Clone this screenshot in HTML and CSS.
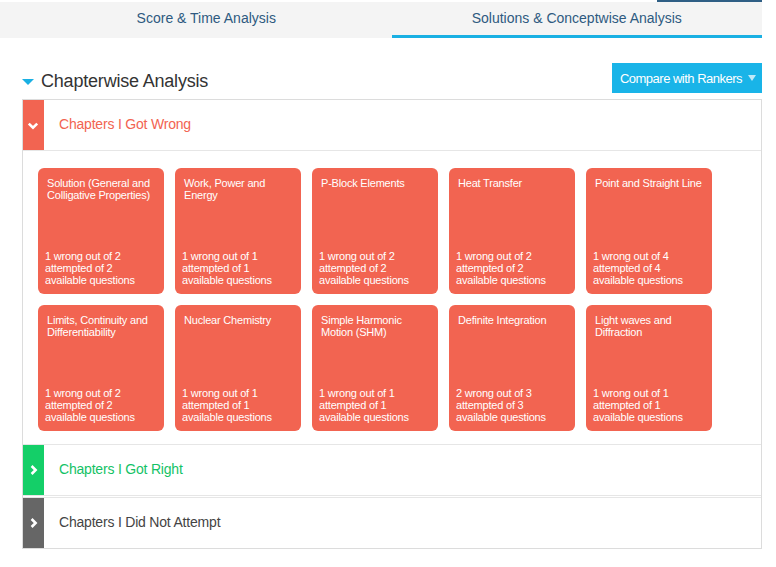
FILE: index.html
```html
<!DOCTYPE html>
<html lang="en">
<head>
  <meta charset="UTF-8" />
  <meta name="viewport" content="width=device-width, initial-scale=1.0"/>
  <title>Chapterwise Analysis</title>
  <link rel="stylesheet" href="styles.css">
</head>
<body>
  <div class="page">
    <div class="top-strip"><span></span></div>

    <div class="tabs">
      <div class="tab">Score &amp; Time Analysis</div>
      <div class="tab active">Solutions &amp; Conceptwise Analysis</div>
    </div>

    <div class="heading-row">
      <h2><span class="caret"></span>Chapterwise Analysis</h2>
      <button class="compare-btn">Compare with Rankers <span class="btn-caret"></span></button>
    </div>

    <div class="panel">
      <div class="section wrong">
        <div class="section-head">
          <div class="bar">
            <svg width="12" height="8" viewBox="0 0 12 8"><path d="M1.8 1.6 L6 5.6 L10.2 1.6" fill="none" stroke="#fff" stroke-width="2.6"/></svg>
          </div>
          <div class="section-title">Chapters I Got Wrong</div>
        </div>
        <div class="cards" id="cards"></div>
      </div>

      <div class="section right">
        <div class="section-head">
          <div class="bar">
            <svg width="8" height="10" viewBox="0 0 8 10"><path d="M1.6 1 L5.6 5 L1.6 9" fill="none" stroke="#fff" stroke-width="2.6"/></svg>
          </div>
          <div class="section-title">Chapters I Got Right</div>
        </div>
      </div>

      <div class="section skipped">
        <div class="section-head">
          <div class="bar">
            <svg width="8" height="10" viewBox="0 0 8 10"><path d="M1.6 1 L5.6 5 L1.6 9" fill="none" stroke="#fff" stroke-width="2.6"/></svg>
          </div>
          <div class="section-title">Chapters I Did Not Attempt</div>
        </div>
      </div>
    </div>
  </div>

  <script>
    const chapters = [
      { name: "Solution (General and Colligative Properties)", wrong: 1, attempted: 2 },
      { name: "Work, Power and Energy", wrong: 1, attempted: 1 },
      { name: "P-Block Elements", wrong: 1, attempted: 2 },
      { name: "Heat Transfer", wrong: 1, attempted: 2 },
      { name: "Point and Straight Line", wrong: 1, attempted: 4 },
      { name: "Limits, Continuity and Differentiability", wrong: 1, attempted: 2 },
      { name: "Nuclear Chemistry", wrong: 1, attempted: 1 },
      { name: "Simple Harmonic Motion (SHM)", wrong: 1, attempted: 1 },
      { name: "Definite Integration", wrong: 2, attempted: 3 },
      { name: "Light waves and Diffraction", wrong: 1, attempted: 1 }
    ];

    function renderCards() {
      const wrap = document.getElementById("cards");
      chapters.forEach(ch => {
        const card = document.createElement("div");
        card.className = "card";
        card.innerHTML = `
          <div class="card-title">${ch.name}</div>
          <div class="card-stats">
            ${ch.wrong} wrong out of ${ch.attempted}<br>
            attempted of ${ch.attempted}<br>
            available questions
          </div>
        `;
        wrap.appendChild(card);
      });
    }

    renderCards();
  </script>
</body>
</html>
```

FILE: styles.css
```css
body {
  font-family: "Liberation Sans", Arial, sans-serif;
  background-color: #fff;
  margin: 0;
  padding: 0;
}
.page {
  width: 762px;
}
.top-strip {
  height: 2px;
  display: flex;
  justify-content: flex-end;
}
.top-strip span {
  width: 105px;
  background-color: #2f5f85;
}
.tabs {
  display: flex;
  background-color: #f4f4f4;
  padding-left: 21px;
}
.tab {
  flex: 1;
  text-align: center;
  font-size: 14px;
  color: #2e5a80;
  height: 33px;
  line-height: 32px;
  border-bottom: 3px solid transparent;
}
.tab.active {
  border-bottom-color: #1ab0e3;
}
.heading-row {
  display: flex;
  justify-content: space-between;
  align-items: center;
  margin-top: 25px;
  margin-left: 22px;
}
h2 {
  margin: 6px 0 0;
  font-size: 18px;
  font-weight: normal;
  color: #333;
  display: flex;
  align-items: center;
  letter-spacing: -0.2px;
}
.caret {
  width: 0;
  height: 0;
  border-left: 6px solid transparent;
  border-right: 6px solid transparent;
  border-top: 6px solid #1ab0e3;
  margin-right: 7px;
  margin-top: 1px;
}
.compare-btn {
  width: 150px;
  height: 30px;
  background-color: #19b4e8;
  color: white;
  border: none;
  font-family: "Liberation Sans", Arial, sans-serif;
  font-size: 13px;
  letter-spacing: -0.5px;
  padding: 0 0 0 2px;
  display: flex;
  align-items: center;
  justify-content: center;
  gap: 6px;
  cursor: pointer;
}
.btn-caret {
  width: 0;
  height: 0;
  border-left: 4px solid transparent;
  border-right: 4px solid transparent;
  border-top: 6px solid #bfe9f8;
}
.panel {
  margin-top: 6px;
  margin-left: 22px;
  border: 1px solid #dcdcdc;
}
.section + .section {
  border-top: 1px solid #e6e6e6;
}
.section.right {
  border-bottom: 1px solid #e6e6e6;
  margin-bottom: 1px;
}
.section-head {
  display: flex;
  align-items: center;
  height: 50px;
}
.bar {
  width: 21px;
  align-self: stretch;
  display: flex;
  align-items: center;
  justify-content: center;
}
.wrong .bar svg {
  margin-top: 2px;
  margin-left: -1px;
}
.section-title {
  font-size: 14px;
  margin-left: 15px;
  padding-bottom: 3px;
  letter-spacing: -0.2px;
}
.wrong .bar { background-color: #f26451; }
.wrong .section-title { color: #f26451; }
.wrong .section-head { border-bottom: 1px solid #e6e6e6; }
.right .bar { background-color: #14cf68; }
.right .section-title { color: #14c266; }
.skipped .bar { background-color: #666; }
.skipped .section-title { color: #444; }
.cards {
  display: grid;
  grid-template-columns: repeat(5, 126px);
  gap: 11px;
  padding: 17px 15px 13px;
}
.card {
  height: 126px;
  box-sizing: border-box;
  background-color: #f26451;
  border-radius: 6px;
  color: #fff;
  font-size: 11px;
  line-height: 12px;
  padding: 9px 8px 8px 7px;
  display: flex;
  flex-direction: column;
  justify-content: space-between;
  letter-spacing: -0.2px;
}
.card-title {
  padding-left: 2px;
}
```
